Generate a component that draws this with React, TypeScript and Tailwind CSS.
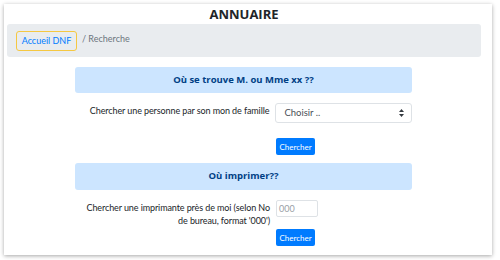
import React from "react";

export default function App() {
  return (
    <div className="w-[500px] h-[260px] bg-white relative" style={{ fontFamily: "Lato, 'Open Sans', sans-serif" }}>
      <div className="absolute left-[4px] top-[4px] w-[488px] h-[251px] bg-white shadow-[0_1px_4px_rgba(0,0,0,0.35)]">
        <div className="flex flex-col">
          <div className="ml-[3px] mr-[11px] h-[19px] mt-[1px] flex items-center justify-center text-[13px] font-bold text-[#212529] leading-none" style={{ fontFamily: "'Open Sans', sans-serif" }}>
            ANNUAIRE
          </div>
          <div className="ml-[3px] mr-[11px] h-[33px] bg-[#e9ecef] rounded-[3px] flex items-start pl-[9px] pt-[7px]">
            <div className="h-[20px] w-[61px] border border-[#f5c842] rounded-[3px] flex items-center justify-center text-[9px] text-[#007bff]">
              Accueil DNF
            </div>
            <div className="ml-[5px] mt-[1px] text-[9px] text-[#6c757d]">/ Recherche</div>
          </div>

          <div className="ml-[71px] w-[337px] mt-[10px] flex flex-col">
            <div className="h-[26px] bg-[#cce5ff] rounded-[3px] flex items-center justify-center text-[9.5px] font-bold text-[#004085]" style={{ fontFamily: "'Open Sans', sans-serif" }}>
              Où se trouve M. ou Mme xx ??
            </div>
            <div className="flex mt-[10px]">
              <div className="w-[201px] pr-[6px] text-right text-[9px] tracking-[-0.1px] text-[#212529] pt-[1px] leading-[13px]">
                Chercher une personne par son mon de famille
              </div>
              <div className="w-[137px] h-[20px] border border-[#dee2e6] rounded-[3px] flex items-center justify-between pl-[8px] pr-[7px] text-[9.5px] text-[#495057]">
                <span>Choisir ..</span>
                <svg width="5" height="8" viewBox="0 0 5 8">
                  <path d="M2.5 0 L5 3 L0 3 Z" fill="#343a40" />
                  <path d="M2.5 8 L5 5 L0 5 Z" fill="#343a40" />
                </svg>
              </div>
            </div>
            <div className="flex mt-[15px]">
              <div className="w-[201px]" />
              <div className="h-[17px] w-[39px] bg-[#007bff] rounded-[2px] flex items-center justify-center text-[8px] text-white">
                Chercher
              </div>
            </div>

            <div className="h-[27px] mt-[8px] bg-[#cce5ff] rounded-[3px] flex items-center justify-center text-[9.5px] font-bold text-[#004085]" style={{ fontFamily: "'Open Sans', sans-serif" }}>
              Où imprimer??
            </div>
            <div className="flex mt-[10px]">
              <div className="w-[201px] pr-[6px] text-right text-[9px] tracking-[-0.1px] text-[#212529] pt-[1px] leading-[13px]">
                Chercher une imprimante près de moi (selon No de bureau, format '000')
              </div>
              <div className="w-[42px] h-[17px] border border-[#dee2e6] rounded-[2px] flex items-center px-[2px] text-[9px] text-[#9aa0a6]">
                000
              </div>
            </div>
            <div className="flex mt-[2px]">
              <div className="w-[201px]" />
              <div className="h-[17px] w-[39px] bg-[#007bff] rounded-[2px] flex items-center justify-center text-[8px] text-white">
                Chercher
              </div>
            </div>
          </div>
        </div>
      </div>
    </div>
  );
}
